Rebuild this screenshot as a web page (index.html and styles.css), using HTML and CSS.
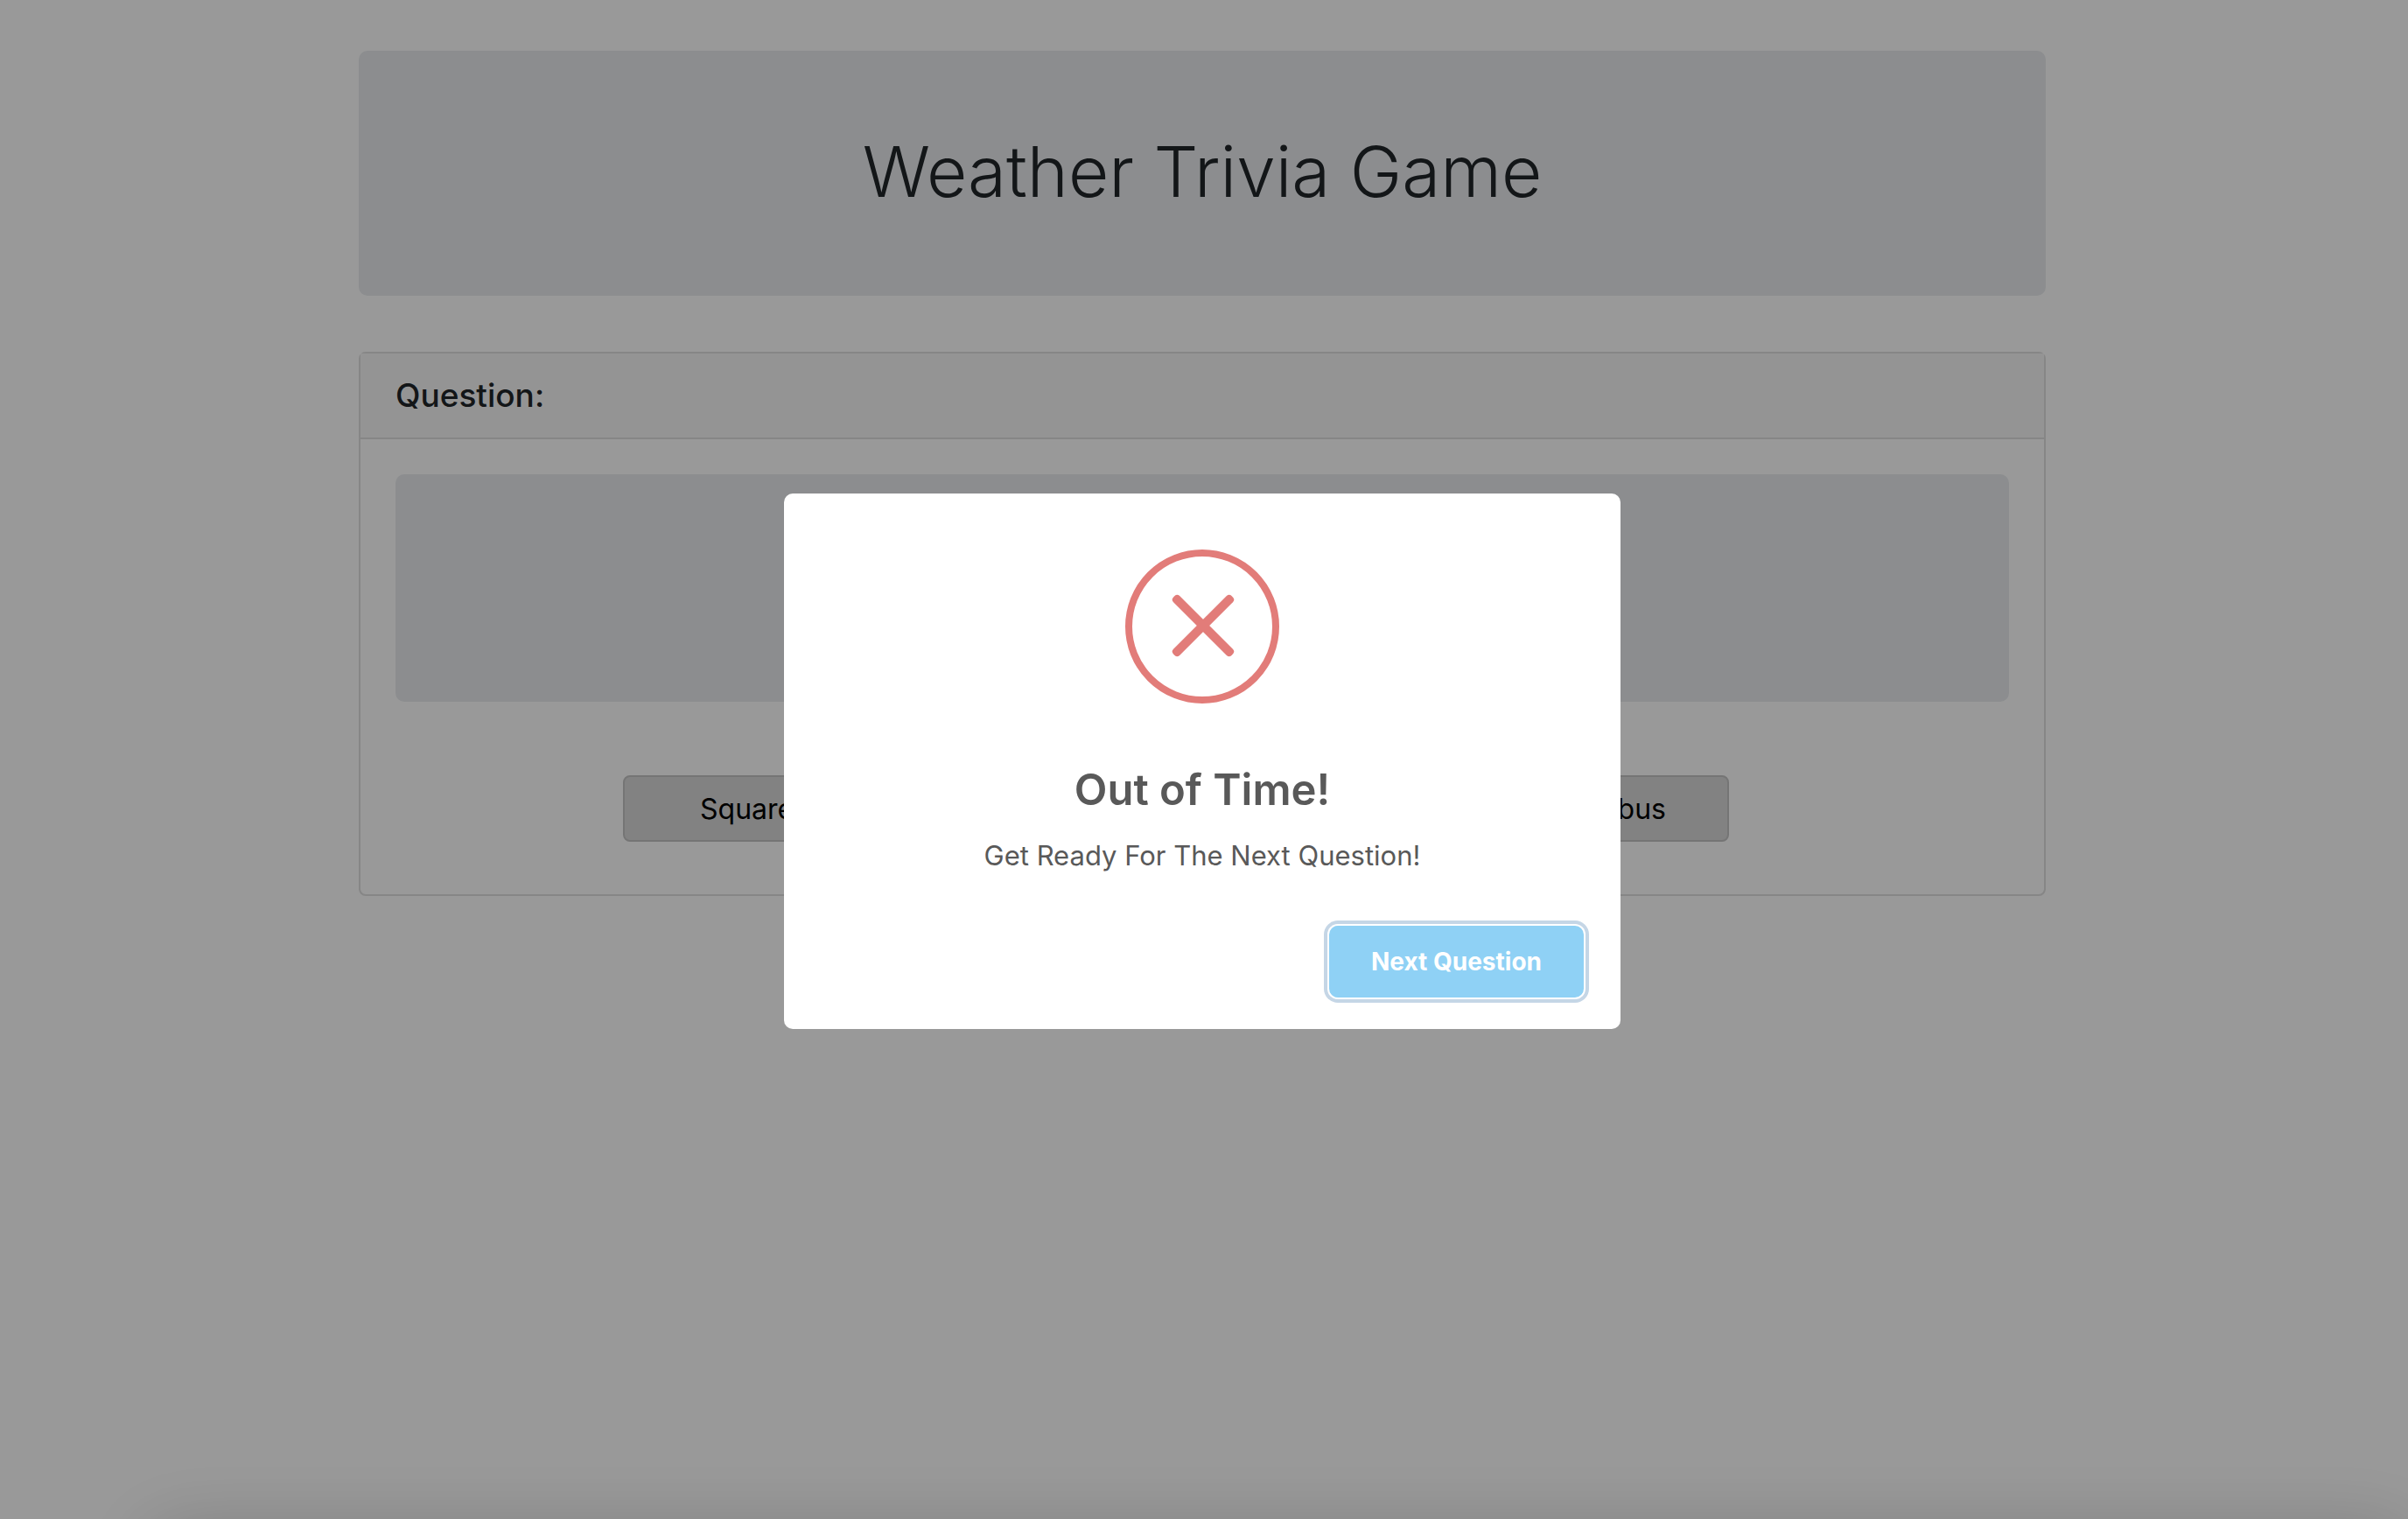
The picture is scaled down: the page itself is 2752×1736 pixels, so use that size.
FILE: index.html
```html
<!DOCTYPE html>
<html lang="en">
<head>
<meta charset="utf-8">
<title>Weather Trivia Game</title>
<link rel="stylesheet" href="styles.css">
</head>
<body>
<main class="container">
  <header class="jumbotron">
    <h1 class="title">Weather Trivia Game</h1>
  </header>
  <section class="card">
    <h2 class="card-header">Question:</h2>
    <div class="card-body">
      <div class="prompt"></div>
      <div class="answers">
        <button class="answer answer-wide" type="button">Square</button>
        <button class="answer" type="button">Nimbus</button>
      </div>
    </div>
  </section>
</main>
<div class="overlay">
  <div class="modal" role="dialog" aria-modal="true" aria-labelledby="modal-title">
    <svg class="modal-icon" viewBox="0 0 176 176" aria-hidden="true">
      <circle cx="88" cy="88" r="84" fill="none" stroke="currentColor" stroke-width="8"/>
      <g fill="currentColor">
        <rect x="42" y="82" width="94" height="10" rx="4" transform="rotate(45 89 87)"/>
        <rect x="42" y="82" width="94" height="10" rx="4" transform="rotate(-45 89 87)"/>
      </g>
    </svg>
    <h2 class="modal-title" id="modal-title">Out of Time!</h2>
    <p class="modal-text">Get Ready For The Next Question!</p>
    <div class="modal-footer">
      <button class="modal-button" type="button">Next Question</button>
    </div>
  </div>
</div>
<div class="bottom-shadow"></div>
</body>
</html>
```
FILE: styles.css
```css
* { box-sizing: border-box; }

body {
  margin: 0;
  padding-right: 4px;
  min-height: 100vh;
  overflow: hidden;
  background: #fff;
  color: #212529;
  font-family: Inter, "Liberation Sans", sans-serif;
}

h1, h2, p { margin: 0; }

.container {
  width: 80%;
  max-width: 1928px;
  margin: 0 auto;
  padding-top: 58px;
}

.jumbotron {
  padding: 84px 40px 88px;
  border-radius: 10px;
  background: #e9ecef;
  text-align: center;
}

.title {
  font-size: 80px;
  line-height: 108px;
  font-weight: 300;
}

.card {
  margin-top: 64px;
  border: 2px solid #dfdfdf;
  border-radius: 8px;
}

.card-header {
  padding: 24px 40px;
  border-bottom: 2px solid #dfdfdf;
  background: #f7f7f7;
  font-size: 37px;
  line-height: 48px;
  font-weight: 500;
}

.card-body { padding: 40px 40px 60px; }

.prompt {
  height: 260px;
  border-radius: 10px;
  background: #e9ecef;
}

.answers {
  display: flex;
  justify-content: space-between;
  margin: 84px 320px 0 260px;
}

.answer {
  height: 76px;
  padding: 0 70px;
  border: 2px solid #c3c3c3;
  border-radius: 8px;
  background: #d9d9d9;
  color: #000;
  font: 400 32px Inter, "Liberation Sans", sans-serif;
}

.answer-wide { padding: 0 86px; }

.overlay {
  position: fixed;
  inset: 0;
  display: flex;
  align-items: center;
  justify-content: center;
  padding: 4px 4px 0 0;
  background: rgba(0, 0, 0, 0.4);
}

.modal {
  display: flex;
  flex-direction: column;
  align-items: center;
  width: 956px;
  padding: 64px 42px 36px;
  border-radius: 10px;
  background: #fff;
  color: #595959;
}

.modal-icon {
  width: 176px;
  height: 176px;
  color: #e27c79;
}

.modal-title {
  margin-top: 66px;
  font-size: 49px;
  line-height: 66px;
  font-weight: 600;
}

.modal-text {
  margin-top: 22px;
  font-size: 31px;
  line-height: 40px;
}

.modal-footer {
  display: flex;
  justify-content: flex-end;
  align-self: stretch;
  margin-top: 60px;
}

.modal-button {
  height: 82px;
  padding: 0 48px;
  border: 0;
  border-radius: 10px;
  background: #8fd1f5;
  box-shadow: 0 0 0 2px #fff, 0 0 0 6px #c5d6e6;
  color: #fff;
  font: 700 28px Inter, "Liberation Sans", sans-serif;
}

.bottom-shadow {
  position: fixed;
  top: 100%;
  left: 172px;
  right: 0;
  height: 200px;
  box-shadow: 0 16px 90px rgba(0, 0, 0, 0.2);
}
```
